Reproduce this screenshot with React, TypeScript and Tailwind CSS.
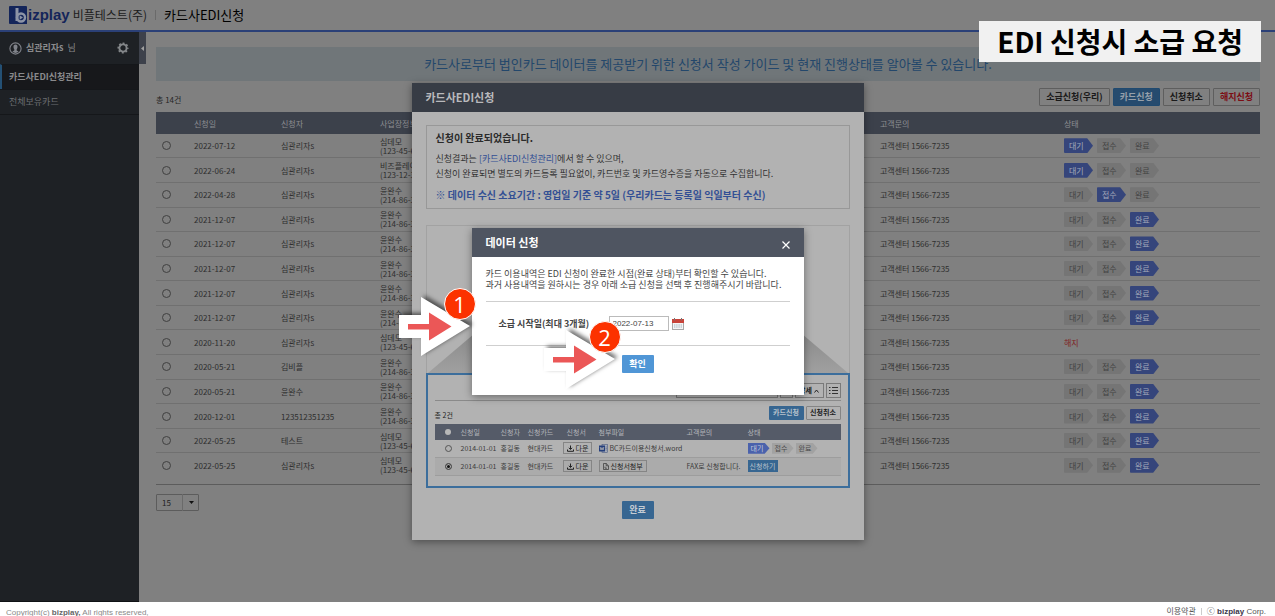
import React, { useState } from 'react';
import clsx from 'clsx';

type Step = '대기' | '접수' | '완료' | '해지';

type Application = {
  date: string;
  applicant: string;
  company: string;
  bizNo: string;
  status: Step;
};

const STEPS: Step[] = ['대기', '접수', '완료'];

const APPLICATIONS: Application[] = [
  { date: '2022-07-12', applicant: '심관리자s', company: '심데모', bizNo: '123-45-67890', status: '대기' },
  { date: '2022-06-24', applicant: '심관리자s', company: '비즈플레이', bizNo: '123-12-31231', status: '대기' },
  { date: '2022-04-28', applicant: '심관리자s', company: '윤완수', bizNo: '214-86-35102', status: '접수' },
  { date: '2021-12-07', applicant: '심관리자s', company: '윤완수', bizNo: '214-86-35102', status: '완료' },
  { date: '2021-12-07', applicant: '심관리자s', company: '윤완수', bizNo: '214-86-35102', status: '완료' },
  { date: '2021-12-07', applicant: '심관리자s', company: '윤완수', bizNo: '214-86-35102', status: '완료' },
  { date: '2021-12-07', applicant: '심관리자s', company: '윤완수', bizNo: '214-86-35102', status: '완료' },
  { date: '2021-12-07', applicant: '심관리자s', company: '윤완수', bizNo: '214-86-35102', status: '완료' },
  { date: '2020-11-20', applicant: '심관리자s', company: '심데모', bizNo: '123-45-67890', status: '해지' },
  { date: '2020-05-21', applicant: '김비플', company: '윤완수', bizNo: '214-86-35102', status: '완료' },
  { date: '2020-05-21', applicant: '윤완수', company: '윤완수', bizNo: '214-86-35102', status: '완료' },
  { date: '2020-12-01', applicant: '123512351235', company: '윤완수', bizNo: '214-86-35102', status: '완료' },
  { date: '2022-05-25', applicant: '테스트', company: '심데모', bizNo: '123-45-67890', status: '완료' },
  { date: '2022-05-25', applicant: '심관리자s', company: '심데모', bizNo: '123-45-67890', status: '완료' },
];

const Header = () => (
  <header className="flex h-[32px] shrink-0 items-center border-b-2 border-[#2b4077] bg-[#808080] pl-[9px]">
    <a href="#" className="flex items-center" aria-label="bizplay">
      <svg width="19" height="18" viewBox="0 0 19 18" aria-hidden="true">
        <path d="M1 0H17Q18 0 18 1V18H1Q0 18 0 17V1Q0 0 1 0Z" fill="#14255a" />
        <path d="M8 2V15" stroke="#8d94a6" strokeWidth="3" />
        <circle cx="12" cy="11.5" r="4" fill="none" stroke="#8d94a6" strokeWidth="2.4" />
        <path d="M10.6 9.3L14 11.5L10.6 13.7Z" fill="#8d94a6" />
      </svg>
      <span className="font-['Liberation_Sans',sans-serif] text-[15px] leading-5 font-bold text-[#14255a]">izplay</span>
    </a>
    <span className="ml-[3px] text-[12px] text-[#1c1c1c]">비플테스트(주)</span>
    <span className="mx-2 h-[10px] w-px bg-[#6a6a6a]" />
    <h1 className="text-[13px] text-black">카드사EDI신청</h1>
  </header>
);

const Sidebar = () => (
  <aside className="w-[139px] shrink-0 border-b border-[#101215] bg-[#1e2125]">
    <div className="flex h-[32px] items-center px-[9px]">
      <svg width="13" height="13" viewBox="0 0 13 13" fill="none" aria-hidden="true">
        <circle cx="6.5" cy="6.5" r="5.6" stroke="#80838a" strokeWidth="1.1" />
        <path d="M6.5 2.6C8 2.6 8.6 3.6 8.5 5C8.4 6.2 8 6.8 7.7 7.3V8.5L9.6 9.6C8.7 10.5 7.7 10.9 6.5 10.9S4.3 10.5 3.4 9.6L5.3 8.5V7.3C5 6.8 4.6 6.2 4.5 5C4.4 3.6 5 2.6 6.5 2.6Z" fill="#80838a" />
      </svg>
      <span className="ml-1 text-[9px] font-bold text-[#8a8a8c]">심관리자s</span>
      <span className="ml-1 text-[9px] text-[#8a8a8c]">님</span>
      <button type="button" aria-label="설정" className="mr-px ml-auto">
        <svg width="12" height="12" viewBox="0 0 12 12" fill="none" stroke="#84878a" aria-hidden="true">
          <circle cx="6" cy="6" r="3.6" strokeWidth="1.9" />
          <circle cx="6" cy="6" r="4.8" strokeWidth="1.5" strokeDasharray="1.9 1.87" strokeDashoffset="0.95" />
        </svg>
      </button>
    </div>
    <nav className="text-[9px] leading-[24px]">
      <a href="#" className="block border-t border-l-2 border-t-[#15171a] border-l-[#245074] bg-[#17181b] pl-[7px] font-bold text-[#8a8a8c]">
        카드사EDI신청관리
      </a>
      <a href="#" className="block border-y border-[#15171a] pl-[9px] text-[#6c6e72]">
        전체보유카드
      </a>
    </nav>
  </aside>
);

const ToolbarButton = ({ children, className }: { children: React.ReactNode; className?: string }) => (
  <button
    type="button"
    className={clsx('h-[18px] rounded-[1px] border px-[6px] text-[9px] leading-[16px] font-bold whitespace-nowrap', className)}
  >
    {children}
  </button>
);

const StatusSteps = ({ current }: { current: Step }) => (
  <div className="flex gap-1">
    {STEPS.map(step => (
      <span
        key={step}
        className={clsx(
          'h-[15px] w-[29px] rounded-[1px] pl-[5px] text-[8px] leading-[15px] [clip-path:polygon(0_0,80%_0,100%_50%,80%_100%,0_100%)]',
          step === current ? 'bg-[#35457b] text-[#a3a9ba]' : 'bg-[#757575] text-[#424242]'
        )}
      >
        {step}
      </span>
    ))}
  </div>
);

const ApplicationTable = () => (
  <div className="border-b border-[#5c5c5c] pb-[7px]">
    <table className="h-[365px] w-full table-fixed border-collapse text-left text-[8px] leading-[9px] text-[#2e2e2e]">
      <colgroup>
        <col className="w-[38px]" />
        <col className="w-[87px]" />
        <col className="w-[99px]" />
        <col />
        <col className="w-[184px]" />
        <col className="w-[196px]" />
      </colgroup>
      <thead>
        <tr className="h-[22px] bg-[#3c414b] text-[#8c8e92]">
          <th className="p-0" aria-label="선택" />
          <th className="p-0 font-normal">신청일</th>
          <th className="p-0 font-normal">신청자</th>
          <th className="p-0 font-normal">사업장정보</th>
          <th className="p-0 font-normal">고객문의</th>
          <th className="p-0 font-normal">상태</th>
        </tr>
      </thead>
      <tbody>
        {APPLICATIONS.map((item, index) => (
          <tr key={index} className="border-b border-[#707070] last:border-b-0">
            <td className="p-0 pl-[6px]">
              <input
                type="radio"
                name="application"
                aria-label={`${item.date} ${item.applicant}`}
                className="block size-[9px] appearance-none rounded-full border border-[#404040]"
              />
            </td>
            <td className="p-0">{item.date}</td>
            <td className="p-0">{item.applicant}</td>
            <td className="p-0">
              {item.company}
              <br />({item.bizNo})
            </td>
            <td className="p-0">고객센터 1566-7235</td>
            <td className="p-0">
              {item.status === '해지' ? (
                <span className="text-[#7f1f1f]">해지</span>
              ) : (
                <StatusSteps current={item.status} />
              )}
            </td>
          </tr>
        ))}
      </tbody>
    </table>
  </div>
);

const MainContent = () => (
  <main className="min-w-0 flex-1 pt-[15px] pr-[15px] pl-[10px]">
    <p className="h-[34px] bg-[#707679] text-center text-[13px] leading-[34px] whitespace-nowrap text-[#23476b]">
      카드사로부터 법인카드 데이터를 제공받기 위한 신청서 작성 가이드 및 현재 진행상태를 알아볼 수 있습니다.
    </p>
    <div className="flex h-[31px] items-center justify-between">
      <span className="pt-[6px] text-[8px] text-[#262626]">총 14건</span>
      <div className="flex gap-[3px]">
        <ToolbarButton className="border-[#5e5e5e] text-[#1a1a1a]">소급신청(우리)</ToolbarButton>
        <ToolbarButton className="border-[#204a70] bg-[#264b6e] text-[#96a0aa]">카드신청</ToolbarButton>
        <ToolbarButton className="border-[#5e5e5e] text-[#1a1a1a]">신청취소</ToolbarButton>
        <ToolbarButton className="border-[#5e5e5e] text-[#7c0d14]">해지신청</ToolbarButton>
      </div>
    </div>
    <ApplicationTable />
    <div className="relative mt-[9px] h-[17px] w-[43px]">
      <select
        aria-label="페이지당 건수"
        className="block h-full w-full appearance-none rounded-[1px] border border-[#5c5c5c] pl-[5px] text-[8px] leading-[15px] text-[#222]"
      >
        <option>15</option>
        <option>30</option>
      </select>
      <span className="pointer-events-none absolute inset-y-0 right-0 flex w-[17px] items-center justify-center border-l border-[#6a6a6a]">
        <svg width="5" height="3" viewBox="0 0 5 3" aria-hidden="true">
          <path d="M0 0H5L2.5 3Z" fill="#111" />
        </svg>
      </span>
    </div>
  </main>
);

const Footer = () => (
  <footer className="flex h-[14px] shrink-0 justify-between overflow-hidden bg-white px-[6px] pt-[5px] font-['Liberation_Sans','Noto_Sans_CJK_KR',sans-serif] text-[8px] leading-[11px] text-[#8a8a8a]">
    <p>
      Copyright(c) <b className="text-[#666]">bizplay,</b> All rights reserved,
    </p>
    <p className="flex items-center gap-[5px] pr-[3px] text-[#555]">
      <a href="#">이용약관</a>
      <span className="h-[7px] w-px bg-[#ccc]" />
      <span>
        ⓒ <b className="text-[#3c3448]">bizplay</b> Corp.
      </span>
    </p>
  </footer>
);

const DownloadIcon = () => (
  <svg width="7" height="7" viewBox="0 0 7 7" fill="none" stroke="#222" aria-hidden="true">
    <path d="M3.5 0.5V4.2M1.8 2.8L3.5 4.4L5.2 2.8M0.5 4.5V6.3H6.5V4.5" strokeWidth="1" />
  </svg>
);

const FileIcon = () => (
  <svg width="6" height="7" viewBox="0 0 6 7" fill="none" stroke="#333" aria-hidden="true">
    <path d="M0.5 0.5H3.2L5.5 2.8V6.5H0.5ZM3.2 0.5V2.8H5.5M2 3.6V5.2H4" strokeWidth="0.7" />
  </svg>
);

const WordIcon = () => (
  <svg width="9" height="9" viewBox="0 0 9 9" aria-hidden="true">
    <rect x="3" y="0.5" width="5.5" height="8" fill="#a6acb8" stroke="#4d5c80" strokeWidth="0.6" />
    <rect x="0" y="1.5" width="6" height="6" fill="#253f7c" />
    <path d="M1.2 3L2 6L3 3.6L4 6L4.8 3" fill="none" stroke="#b2b2b2" strokeWidth="0.8" />
    <path d="M6.5 3H8M6.5 4.5H8M6.5 6H8" stroke="#4d5c80" strokeWidth="0.5" />
  </svg>
);

const SmallButton = ({ children }: { children: React.ReactNode }) => (
  <button type="button" className="flex h-[12px] items-center gap-[2px] border border-[#858585] px-[3px] whitespace-nowrap text-[#222]">
    {children}
  </button>
);

// Sample of the management screen shown inside the completion dialog
const ManagementPreview = () => (
  <div className="h-[115px] border-2 border-[#3c6e9c] px-[7px] pt-2 text-[7px] leading-[9px] text-[#3c3c3c]">
    <div className="flex h-[18px] justify-end gap-[2px] border-b border-[#8a8a8a]">
      <input type="text" aria-label="검색어" className="h-[15px] w-[102px] border border-[#7a7a7a]" />
      <button type="button" aria-label="검색" className="h-[15px] w-[13px] border border-[#7a7a7a]" />
      <button type="button" className="flex h-[15px] w-[29px] items-center justify-center gap-[2px] border border-[#7a7a7a] font-bold text-[#222]">
        상세
        <svg width="5" height="4" viewBox="0 0 5 4" fill="none" stroke="#222" aria-hidden="true">
          <path d="M0.5 3.5L2.5 1L4.5 3.5" />
        </svg>
      </button>
      <button type="button" aria-label="목록" className="flex h-[15px] w-[15px] items-center justify-center border border-[#7a7a7a]">
        <svg width="9" height="7" viewBox="0 0 9 7" stroke="#333" aria-hidden="true">
          <path d="M0 0.5H1.5M0 3.5H1.5M0 6.5H1.5M3 0.5H9M3 3.5H9M3 6.5H9" />
        </svg>
      </button>
    </div>
    <div className="flex h-[23px] items-center justify-between">
      <span className="pt-[6px] text-[#222]">총 2건</span>
      <div className="flex gap-[2px] font-bold">
        <button type="button" className="h-[14px] w-[35px] rounded-[1px] bg-[#376691] text-[#b7c2cc]">카드신청</button>
        <button type="button" className="h-[14px] w-[35px] rounded-[1px] border border-[#858585] text-[#222]">신청취소</button>
      </div>
    </div>
    <table className="w-full table-fixed border-collapse text-left whitespace-nowrap">
      <colgroup>
        <col className="w-[26px]" />
        <col className="w-[40px]" />
        <col className="w-[27px]" />
        <col className="w-[35px]" />
        <col className="w-[36px]" />
        <col className="w-[88px]" />
        <col className="w-[61px]" />
        <col />
      </colgroup>
      <thead>
        <tr className="h-[16px] bg-[#555b68] text-[#b2b4b8]">
          <th className="p-0 pl-[10px]">
            <span className="block size-[6px] rounded-full bg-[#b8b8b8]" />
          </th>
          <th className="p-0 font-normal">신청일</th>
          <th className="p-0 font-normal">신청자</th>
          <th className="p-0 font-normal">신청카드</th>
          <th className="p-0 pl-1 font-normal">신청서</th>
          <th className="p-0 font-normal">첨부파일</th>
          <th className="p-0 font-normal">고객문의</th>
          <th className="p-0 font-normal">상태</th>
        </tr>
      </thead>
      <tbody>
        <tr className="h-[17px] border-b border-[#9d9d9d]">
          <td className="p-0 pl-[10px]">
            <input type="radio" name="preview" aria-label="BC카드이용신청서" className="block size-[7px] appearance-none rounded-full border border-[#555]" />
          </td>
          <td className="p-0">2014-01-01</td>
          <td className="p-0">홍길동</td>
          <td className="p-0">현대카드</td>
          <td className="p-0">
            <SmallButton>
              <DownloadIcon />
              다운
            </SmallButton>
          </td>
          <td className="p-0">
            <a href="#" className="flex items-center gap-[2px]">
              <WordIcon />
              BC카드이용신청서.word
            </a>
          </td>
          <td className="p-0" />
          <td className="p-0">
            <div className="flex gap-[2px]">
              {STEPS.map((step, index) => (
                <span
                  key={step}
                  className={clsx(
                    'h-[11px] w-[22px] pl-[3px] leading-[11px] [clip-path:polygon(0_0,78%_0,100%_50%,78%_100%,0_100%)]',
                    index === 0 ? 'bg-[#4b62ac] text-[#c2c8da]' : 'bg-[#a2a2a2] text-[#4c4c4c]'
                  )}
                >
                  {step}
                </span>
              ))}
            </div>
          </td>
        </tr>
        <tr className="h-[18px] border-b border-[#9d9d9d] bg-[#ababab]">
          <td className="p-0 pl-[10px]">
            <input
              type="radio"
              name="preview"
              defaultChecked
              aria-label="신청서첨부"
              className="block size-[7px] appearance-none rounded-full border border-[#555] bg-[#111] ring-1 ring-[#b2b2b2] ring-inset"
            />
          </td>
          <td className="p-0">2014-01-01</td>
          <td className="p-0">홍길동</td>
          <td className="p-0">현대카드</td>
          <td className="p-0">
            <SmallButton>
              <DownloadIcon />
              다운
            </SmallButton>
          </td>
          <td className="p-0">
            <SmallButton>
              <FileIcon />
              신청서첨부
            </SmallButton>
          </td>
          <td className="p-0">FAX로 신청합니다.</td>
          <td className="p-0">
            <button type="button" className="block h-[12px] w-[30px] bg-[#376691] text-center leading-[12px] text-[#b7c2cc]">
              신청하기
            </button>
          </td>
        </tr>
      </tbody>
    </table>
  </div>
);

const CompletionDialog = () => (
  <section className="w-[452px] bg-[#b2b2b2] shadow-[0_2px_8px_rgba(0,0,0,0.4)]">
    <h2 className="h-[29px] bg-[#373c45] pl-[14px] text-[11px] leading-[29px] font-bold text-[#b9b9bc]">카드사EDI신청</h2>
    <div className="flex flex-col px-[14px] pt-[13px] pb-[21px]">
      <div className="h-[84px] border border-[#989898] px-[9px] pt-1 text-[9px] leading-[15px] whitespace-nowrap text-[#333]">
        <p className="mb-[6px] text-[10px] font-bold text-[#2a2a2a]">신청이 완료되었습니다.</p>
        <p>
          신청결과는 <a href="#" className="text-[#324f94]">[카드사EDI신청관리]</a>에서 할 수 있으며,
        </p>
        <p>신청이 완료되면 별도의 카드등록 필요없이, 카드번호 및 카드영수증을 자동으로 수집합니다.</p>
        <p className="mt-[6px] text-[10px] font-bold text-[#324f94]">
          ※ 데이터 수신 소요기간 : 영업일 기준 약 5일 (우리카드는 등록일 익일부터 수신)
        </p>
      </div>
      <div className="mt-4 flex h-[148px] items-end border border-b-0 border-[#a2a2a2]">
        <svg className="h-[60px] w-full" viewBox="0 0 424 60" preserveAspectRatio="none" aria-hidden="true">
          <defs>
            <linearGradient id="beam" x1="0" y1="0" x2="0" y2="1">
              <stop offset="0" stopColor="#808080" />
              <stop offset="1" stopColor="#a0a0a0" />
            </linearGradient>
          </defs>
          <path d="M1 60L72 0H352L423 60Z" fill="url(#beam)" />
        </svg>
      </div>
      <ManagementPreview />
      <button type="button" className="mt-[13px] h-[18px] w-[32px] self-center rounded-[1px] bg-[#376691] text-[9px] leading-[18px] font-bold text-[#c4ccd4]">
        완료
      </button>
    </div>
  </section>
);

const Marker = ({ number, className }: { number: number; className: string }) => (
  <div className={clsx('pointer-events-none absolute h-[72px] w-[86px]', className)}>
    <svg width="86" height="72" viewBox="0 0 86 72" aria-hidden="true">
      <path
        d="M2 28H24V10L73 39L24 69V51H2Z"
        fill="white"
        className="[filter:drop-shadow(3px_-2px_2px_rgba(0,0,0,0.55))]"
      />
      <path d="M11 37H32V25.5L54.5 39.5L32 53.5V42.5H11Z" fill="#eb5757" />
    </svg>
    <span className="absolute top-px right-[7px] size-[32px] rounded-full border border-white bg-[#fc3200] text-center font-['Open_Sans',sans-serif] text-[22px] leading-[30px] text-white">
      {number}
    </span>
  </div>
);

const DataRequestDialog = () => {
  const [startDate, setStartDate] = useState('2022-07-13');

  return (
    <section className="relative h-[167px] w-[332px] bg-white shadow-[0_2px_8px_rgba(0,0,0,0.4)]">
      <div className="flex h-[29px] items-center justify-between bg-[#4f5561] px-[14px] text-white">
        <h2 className="text-[11px] font-bold">데이터 신청</h2>
        <button type="button" aria-label="닫기" className="pt-1">
          <svg width="8" height="8" viewBox="0 0 8 8" stroke="white" strokeWidth="1.2" aria-hidden="true">
            <path d="M0.5 0.5L7.5 7.5M7.5 0.5L0.5 7.5" />
          </svg>
        </button>
      </div>
      <div className="flex flex-col px-[14px]">
        <p className="mt-[11px] text-[9px] leading-[11px] whitespace-nowrap text-[#444]">
          카드 이용내역은 EDI 신청이 완료한 시점(완료 상태)부터 확인할 수 있습니다.
          <br />
          과거 사용내역을 원하시는 경우 아래 소급 신청을 선택 후 진행해주시기 바랍니다.
        </p>
        <div className="mt-[11px] flex h-[45px] items-center border-y border-[#cfcfcf] pl-[13px]">
          <label htmlFor="start-date" className="w-[110px] text-[9px] font-bold text-[#444]">
            소급 시작일(최대 3개월)
          </label>
          <input
            id="start-date"
            type="text"
            value={startDate}
            onChange={e => setStartDate(e.target.value)}
            className="h-[15px] w-[60px] border border-[#bbb] pl-[3px] font-['Liberation_Sans',sans-serif] text-[8px] text-[#444]"
          />
          <button type="button" aria-label="날짜 선택" className="ml-[3px]">
            <svg width="12" height="12" viewBox="0 0 12 12" aria-hidden="true">
              <rect x="0.5" y="1.5" width="11" height="10" fill="#f5f5f5" stroke="#a9a9a9" />
              <rect x="0" y="1" width="12" height="4" fill="#c8443a" />
              <path d="M2.5 0V2.5M9.5 0V2.5" stroke="#777" />
              <path d="M2 7H10M2 9H10" stroke="#9fb4c0" strokeDasharray="1.4 0.8" />
            </svg>
          </button>
        </div>
        <button type="button" className="mt-[9px] h-[18px] w-[32px] self-center rounded-[1px] bg-[#5096d6] text-[9px] leading-[18px] font-bold text-white">
          확인
        </button>
      </div>
      <Marker number={1} className="top-[59px] left-[-75px]" />
      <Marker number={2} className="top-[92px] left-[70px]" />
    </section>
  );
};

const App = () => (
  <div className="relative flex h-screen flex-col overflow-hidden bg-[#808080] font-['Noto_Sans_CJK_KR',sans-serif]">
    <Header />
    <div className="flex min-h-0 flex-1">
      <Sidebar />
      <button type="button" aria-label="메뉴 접기" className="flex h-[32px] w-[7px] shrink-0 items-center justify-center bg-[#3d414b]">
        <svg width="3" height="5" viewBox="0 0 3 5" aria-hidden="true">
          <path d="M3 0V5L0 2.5Z" fill="#a0a0a0" />
        </svg>
      </button>
      <MainContent />
    </div>
    <Footer />

    <div className="absolute inset-0 flex items-start justify-center pt-[83px]">
      <CompletionDialog />
    </div>
    <div className="absolute inset-0 flex items-start justify-center pt-[228px]">
      <DataRequestDialog />
    </div>
    <p className="absolute top-[21px] right-[14px] h-[41px] bg-[#f1f1f1] px-[18px] text-[28px] leading-[41px] font-bold text-black">
      EDI 신청시 소급 요청
    </p>
  </div>
);

export default App;
